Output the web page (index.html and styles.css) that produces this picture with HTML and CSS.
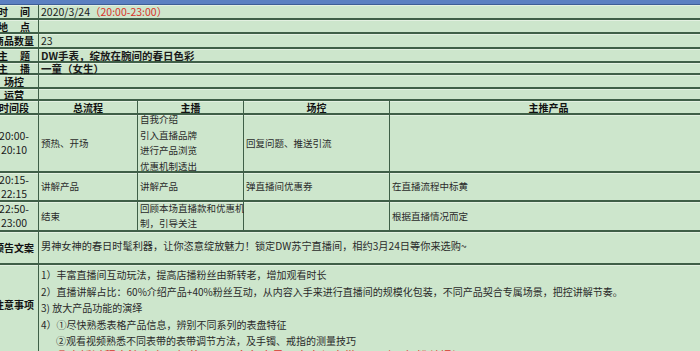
FILE: index.html
```html
<!DOCTYPE html>
<html lang="zh-CN">
<head>
<meta charset="utf-8">
<title>直播脚本</title>
<link rel="stylesheet" href="styles.css">
</head>
<body>
<div class="topbar"></div>
<div class="sheet">
  <div class="lbl dist"><span>时</span><span>间</span></div>
  <div class="val span4">2020/3/24<span class="red">（20:00-23:00）</span></div>

  <div class="lbl dist"><span>地</span><span>点</span></div>
  <div class="val span4"></div>

  <div class="lbl">商品数量</div>
  <div class="val span4">23</div>

  <div class="lbl dist"><span>主</span><span>题</span></div>
  <div class="val span4 b">DW手表，绽放在腕间的春日色彩</div>

  <div class="lbl dist"><span>主</span><span>播</span></div>
  <div class="val span4 b">一童（女生）</div>

  <div class="lbl">场控</div>
  <div class="val span4"></div>

  <div class="lbl">运营</div>
  <div class="val span4"></div>

  <div class="lbl">时间段</div>
  <div class="th">总流程</div>
  <div class="th">主播</div>
  <div class="th">场控</div>
  <div class="th">主推产品</div>

  <div class="time">20:00-<br>20:10</div>
  <div class="cell">预热、开场</div>
  <div class="cell list">自我介绍<br>引入直播品牌<br>进行产品浏览<br>优惠机制透出</div>
  <div class="cell">回复问题、推送引流</div>
  <div class="cell"></div>

  <div class="time">20:15-<br>22:15</div>
  <div class="cell">讲解产品</div>
  <div class="cell">讲解产品</div>
  <div class="cell">弹直播间优惠券</div>
  <div class="cell">在直播流程中标黄</div>

  <div class="time">22:50-<br>23:00</div>
  <div class="cell">结束</div>
  <div class="cell">回顾本场直播款和优惠机<br>制，引导关注</div>
  <div class="cell"></div>
  <div class="cell">根据直播情况而定</div>

  <div class="lbl">预告文案</div>
  <div class="cell span4 preview">男神女神的春日时髦利器，让你恣意绽放魅力！锁定DW苏宁直播间，相约3月24日等你来选购~</div>

  <div class="lbl notes-lbl">注意事项</div>
  <div class="cell span4 notes">
    <p>1）丰富直播间互动玩法，提高店播粉丝由新转老，增加观看时长</p>
    <p>2）直播讲解占比：60%介绍产品+40%粉丝互动，从内容入手来进行直播间的规模化包装，不同产品契合专属场景，把控讲解节奏。</p>
    <p>3) 放大产品功能的演绎</p>
    <p>4）①尽快熟悉表格产品信息，辨别不同系列的表盘特征</p>
    <p class="indent">②观看视频熟悉不同表带的表带调节方法，及手镯、戒指的测量技巧</p>
    <p class="indent red big">③直播过程中注意产品细节展示，多角度呈现表盘与表带，及时回复粉丝提问</p>
  </div>
</div>
</body>
</html>
```

FILE: styles.css
```css
html, body {
  margin: 0;
  padding: 0;
}

body {
  width: 700px;
  height: 351px;
  overflow: hidden;
  background: #cde6cc;
  font-family: "Noto Sans CJK SC", "Noto Sans", sans-serif;
  color: #222;
}

.topbar {
  height: 4px;
  background: #5b80c1;
  border-bottom: 1px solid #3d5e96;
}

.sheet {
  display: grid;
  width: 717px;
  margin-left: -10px;
  grid-template-columns: 48px 98px 105px 145px 1fr;
  grid-template-rows: 13px 12px 13px 12px 10px 12px 10px 12px 56px 27px 28px 31px 130px;
  gap: 2px 1px;
  background: #3f5f47;
}

.sheet > div {
  background: #cde6cc;
  box-shadow: inset 0 1px 0 #e3f0e1;
  display: flex;
  align-items: center;
  padding: 0 2px;
  min-width: 0;
  white-space: nowrap;
  font-size: 9.5px;
  line-height: 15px;
}

.span4 {
  grid-column: 2 / 6;
}

.lbl {
  justify-content: center;
  font-weight: 700;
  font-size: 10px !important;
  line-height: 11px !important;
  color: #111;
}

.lbl.dist {
  justify-content: space-between;
  padding: 0 8px !important;
}

.val {
  font-size: 10.5px !important;
  line-height: 11px !important;
  color: #1a1a1a;
}

.b {
  font-weight: 700;
}

.red {
  color: #d8352b;
}

.th {
  justify-content: center;
  font-weight: 700;
  font-size: 10px !important;
  line-height: 11px !important;
  color: #111;
}

.time {
  justify-content: center;
  text-align: center;
  font-size: 10.5px !important;
  line-height: 14px !important;
  color: #1a1a1a;
}

.cell {
  color: #2a2a2a;
}

.list {
  line-height: 15.5px !important;
}

.preview {
  font-size: 10.2px !important;
  padding-bottom: 4px !important;
}

.notes-lbl {
  align-items: flex-start !important;
  padding-top: 34px !important;
}

.notes {
  display: block !important;
  padding-top: 2px !important;
  font-size: 10px !important;
  line-height: 16.6px !important;
}

.notes p {
  margin: 0;
}

.notes .indent {
  padding-left: 15px;
}

.notes .big {
  font-size: 12px;
  line-height: 14px;
  margin-top: -1px;
}
```
